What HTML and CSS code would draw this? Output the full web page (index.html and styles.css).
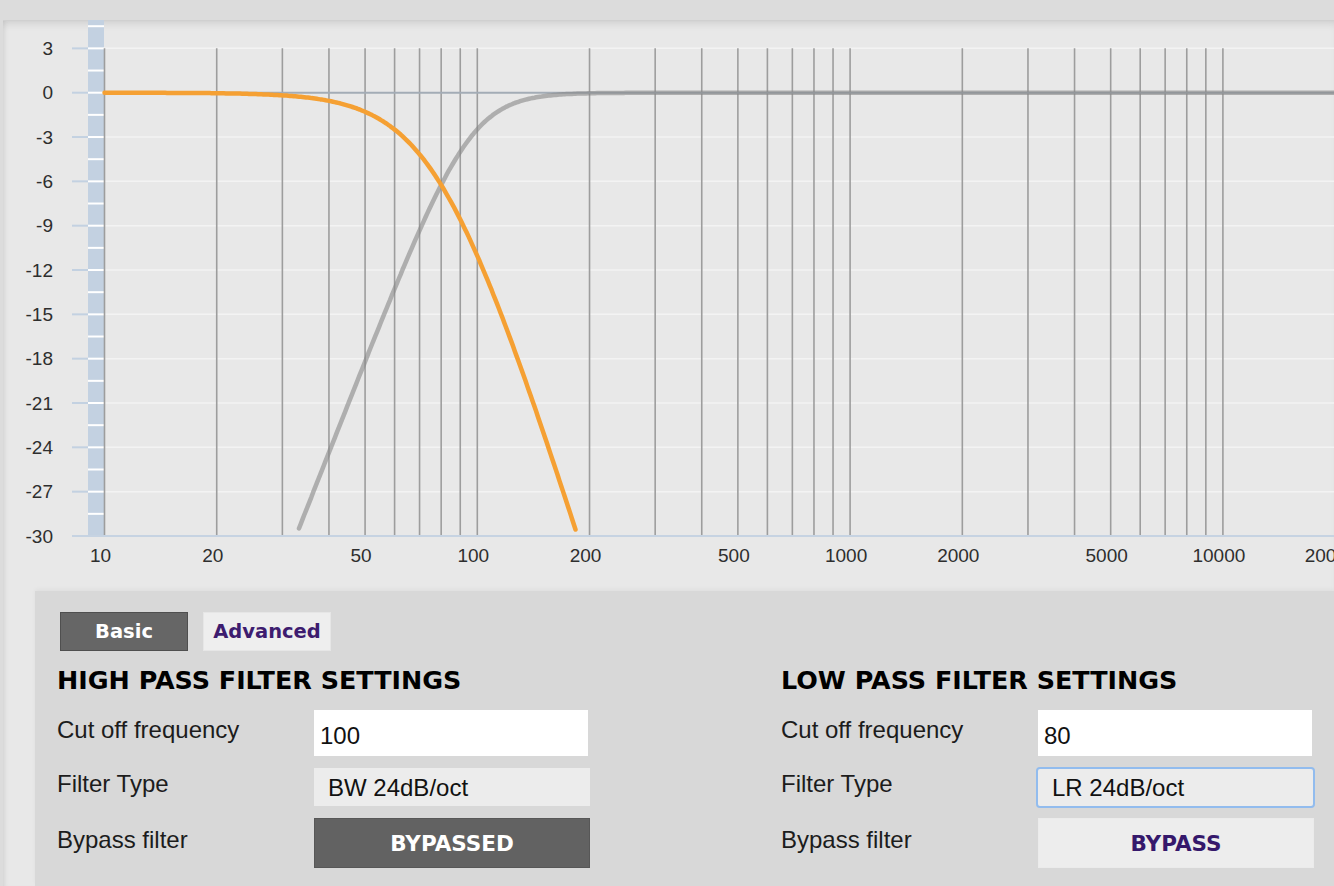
FILE: index.html
```html
<!DOCTYPE html>
<html lang="en">
<head>
    <meta charset="UTF-8">
    <meta name="viewport" content="width=device-width, initial-scale=1.0">
    <title>Crossover Filter</title>
    <link rel="stylesheet" href="styles.css">
</head>
<body>
    <div class="app">
        <svg id="chart" class="chart" viewBox="3 20 1331 571" width="1331" height="571"></svg>

        <div class="settings">
            <div class="tabs">
                <button class="tab active">Basic</button>
                <button class="tab">Advanced</button>
            </div>

            <div class="filters">
                <section class="filter">
                    <h2>HIGH PASS FILTER SETTINGS</h2>
                    <div class="row">
                        <label for="hp-freq">Cut off frequency</label>
                        <input type="text" id="hp-freq" class="field" value="100">
                    </div>
                    <div class="row">
                        <label for="hp-type">Filter Type</label>
                        <select id="hp-type" class="field select">
                            <option>BW 24dB/oct</option>
                        </select>
                    </div>
                    <div class="row">
                        <label>Bypass filter</label>
                        <button class="bypass on">BYPASSED</button>
                    </div>
                </section>

                <section class="filter">
                    <h2>LOW PASS FILTER SETTINGS</h2>
                    <div class="row">
                        <label for="lp-freq">Cut off frequency</label>
                        <input type="text" id="lp-freq" class="field" value="80">
                    </div>
                    <div class="row">
                        <label for="lp-type">Filter Type</label>
                        <select id="lp-type" class="field select focused">
                            <option>LR 24dB/oct</option>
                        </select>
                    </div>
                    <div class="row">
                        <label>Bypass filter</label>
                        <button class="bypass">BYPASS</button>
                    </div>
                </section>
            </div>
        </div>
    </div>

    <script>
        // chart geometry (page pixels)
        const NS = 'http://www.w3.org/2000/svg';
        const svg = document.getElementById('chart');
        const X0 = 104.5, DECADE = 372.8;
        const Y0 = 92.7, PX_PER_DB = 44.33 / 3;
        const RIGHT = 1334;

        function fx(f) { return X0 + DECADE * Math.log10(f / 10); }
        function dy(db) { return Y0 - db * PX_PER_DB; }

        function add(tag, attrs, text) {
            const el = document.createElementNS(NS, tag);
            for (const k in attrs) el.setAttribute(k, attrs[k]);
            if (text !== undefined) el.textContent = text;
            svg.appendChild(el);
            return el;
        }

        // sample a response from 10 Hz to 22 kHz, drop what falls under the floor
        function curve(response, floor) {
            const pts = [];
            for (let i = 0; i <= 700; i++) {
                const f = 10 * Math.pow(10, i * 3.35 / 700);
                const db = response(f);
                if (db >= floor) pts.push(fx(f).toFixed(1) + ',' + dy(db).toFixed(1));
            }
            return 'M' + pts.join(' L');
        }

        // horizontal grid
        for (let db = 3; db > -30; db -= 3) {
            if (db === 0) continue;
            add('line', { x1: 104, x2: RIGHT, y1: dy(db), y2: dy(db), class: 'hgrid' });
        }

        // dB axis strip
        add('rect', { x: 88, y: 20, width: 16, height: dy(-30) - 20, class: 'strip' });
        for (let db = 4.5; db > -30; db -= 1.5) {
            add('rect', { x: 88, y: dy(db) - 1, width: 16, height: 2, class: 'strip-tick' });
        }
        for (let db = 3; db >= -30; db -= 3) {
            add('line', { x1: 72, x2: 88, y1: dy(db), y2: dy(db), class: 'ytick' });
            add('text', { x: 53, y: dy(db) + 6.5, class: 'ylabel' }, String(db));
        }

        // frequency grid
        const freqs = [];
        for (const base of [10, 100, 1000]) {
            for (let m = 1; m <= 9; m++) freqs.push(base * m);
        }
        freqs.push(10000, 20000);
        freqs.forEach(function (f) {
            add('line', { x1: fx(f), x2: fx(f), y1: dy(3), y2: dy(-30), class: 'vgrid' });
        });

        add('line', { x1: 104, x2: RIGHT, y1: Y0, y2: Y0, class: 'zero' });
        add('line', { x1: 72, x2: RIGHT, y1: dy(-30), y2: dy(-30), class: 'baseline' });

        [10, 20, 50, 100, 200, 500, 1000, 2000, 5000, 10000, 20000].forEach(function (f) {
            add('text', { x: fx(f) - 4, y: 562, class: 'xlabel' }, String(f));
        });

        // response curves
        function highPass(f) { return -10 * Math.log10(1 + Math.pow(96 / f, 6.4)); }
        function lowPass(f) { return -20 * Math.log10(1 + Math.pow(f / 79, 4)); }

        add('path', { d: curve(highPass, -29.5), class: 'curve hp' });
        add('path', { d: curve(lowPass, -29.7), class: 'curve lp' });
    </script>
</body>
</html>
```

FILE: styles.css
```css
html, body {
    margin: 0;
    overflow: hidden;
}
body {
    background-color: #dcdcdc;
    font-family: "Liberation Sans", Arial, sans-serif;
    height: 886px;
}
.app {
    margin: 20px 0 0 3px;
    background-color: #e8e8e8;
    border-top: 1px solid #d0d0d0;
    box-shadow: inset 0 7px 8px -5px rgba(0,0,0,0.12), inset 5px 0 6px -5px rgba(0,0,0,0.12);
    height: 865px;
}
.chart {
    display: block;
    margin-top: -1px;
}
.chart .hgrid {
    stroke: #f3f3f3;
    stroke-width: 1.5;
}
.chart .strip {
    fill: #c3d1e1;
}
.chart .strip-tick {
    fill: #ffffff;
}
.chart .ytick {
    stroke: #c3d1e1;
    stroke-width: 2;
}
.chart .vgrid {
    stroke: #9d9d9d;
    stroke-width: 1.6;
}
.chart .zero {
    stroke: #a3acb6;
    stroke-width: 2;
}
.chart .baseline {
    stroke: #c6d3e2;
    stroke-width: 2;
}
.chart text {
    font-family: "Liberation Sans", Arial, sans-serif;
    font-size: 19px;
    fill: #2e2e2e;
}
.chart .ylabel {
    text-anchor: end;
}
.chart .xlabel {
    text-anchor: middle;
}
.chart .curve {
    fill: none;
    stroke-width: 4.5;
    stroke-linecap: round;
    stroke-linejoin: round;
}
.chart .hp {
    stroke: rgba(135,135,135,0.6);
}
.chart .lp {
    stroke: #f5a033;
}

.settings {
    margin-left: 32px;
    height: 295px;
    box-sizing: border-box;
    padding: 21px 0 0 22px;
    background-color: #d8d8d8;
    box-shadow: 0 -2px 4px rgba(0,0,0,0.04);
}
.tabs {
    display: flex;
    gap: 15px;
    margin-left: 3px;
}
.tab {
    width: 128px;
    height: 39px;
    padding: 0;
    border: 1px solid #e6e6e6;
    background-color: #eeeeee;
    color: #3d1c6f;
    font-family: "DejaVu Sans", Verdana, sans-serif;
    font-weight: bold;
    font-size: 19.5px;
    cursor: pointer;
}
.tab.active {
    border-color: #4f4f4f;
    background-color: #666666;
    color: #ffffff;
}
.filters {
    display: grid;
    grid-template-columns: 533px 535px;
    column-gap: 191px;
}
.filter h2 {
    margin: 14px 0 15px;
    font-family: "DejaVu Sans", Verdana, sans-serif;
    font-size: 25.4px;
    line-height: 30px;
    color: #000000;
}
.row {
    display: grid;
    grid-template-columns: 257px 1fr;
    align-items: center;
    margin-bottom: 12px;
}
.row label {
    font-size: 24px;
    color: #1c1c1c;
    margin-bottom: 6px;
}
.field {
    box-sizing: border-box;
    border: none;
    font-family: "Liberation Sans", Arial, sans-serif;
    font-size: 24px;
    color: #111111;
    outline: none;
}
input.field {
    width: 274px;
    height: 46px;
    padding: 6px 0 0 6px;
    background-color: #ffffff;
}
.select {
    width: 276px;
    height: 38px;
    padding: 0 0 0 14px;
    background-color: #ececec;
    appearance: none;
    -webkit-appearance: none;
    border-radius: 0;
}
.select.focused {
    height: 41px;
    margin: -1px 0 -2px -2px;
    width: 279px;
    padding-left: 14px;
    border: 2px solid #92bcee;
    border-radius: 4px;
}
.bypass {
    width: 276px;
    height: 50px;
    padding: 0;
    border: 1px solid #ebebeb;
    background-color: #ededed;
    color: #35186b;
    font-family: "DejaVu Sans", Verdana, sans-serif;
    font-weight: bold;
    font-size: 21.5px;
    cursor: pointer;
}
.bypass.on {
    border-color: #575757;
    background-color: #626262;
    color: #ffffff;
}
```
